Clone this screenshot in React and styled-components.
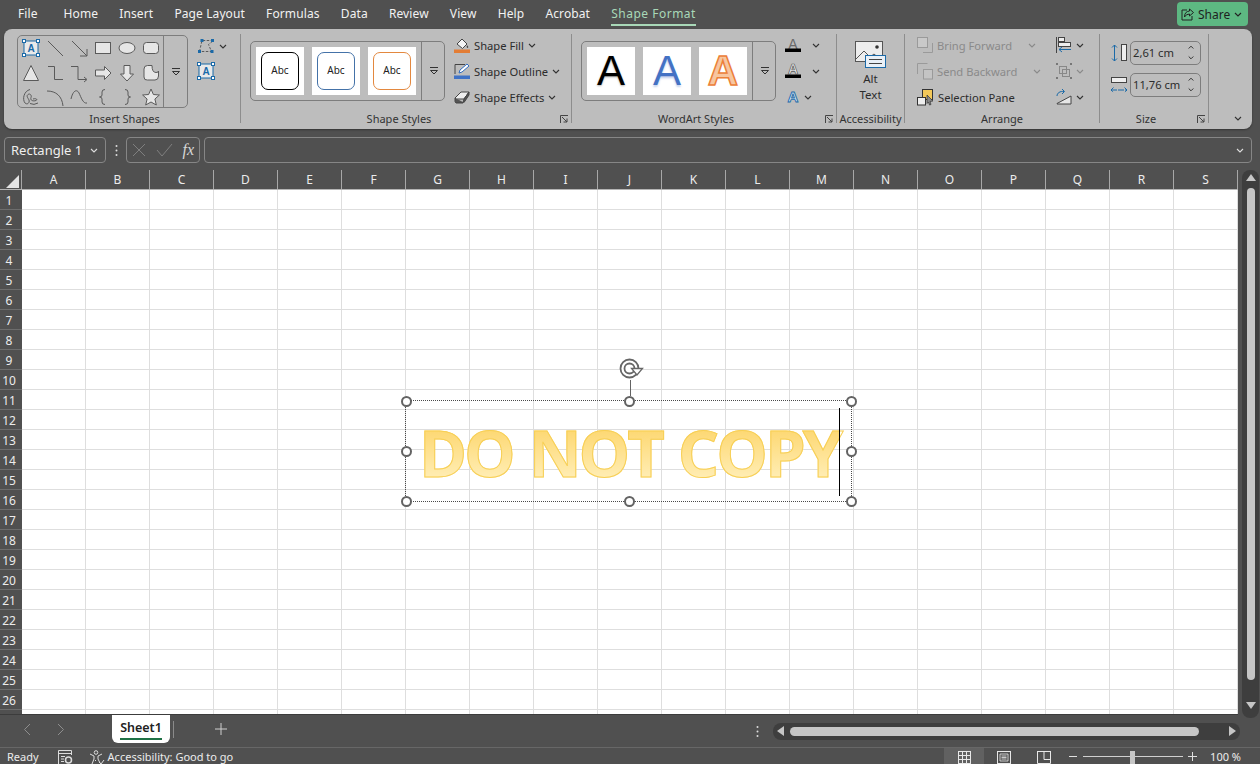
import React from "react";
import styled, { createGlobalStyle } from "styled-components";

const Global = createGlobalStyle`
  html, body { margin: 0; padding: 0; background: #505050; }
  body { font-family: "Noto Sans", "Open Sans", sans-serif; }
  * { box-sizing: border-box; }
`;

const Page = styled.div`
  width: 1260px; height: 764px; overflow: hidden; background: #505050;
  display: flex; flex-direction: column; color: #f0f0f0;
`;

/* ---------- top tabs ---------- */
const TabBar = styled.div`
  height: 29px; display: flex; align-items: flex-start; padding-left: 18px;
  position: relative;
`;
const Tab = styled.div`
  height: 26px; line-height: 28px; font-size: 12px; white-space: nowrap;
  margin-right: ${p => p.$gap ?? 21.2}px; letter-spacing: ${p => (p.$active ? 0.5 : 0.1)}px;
  color: ${p => (p.$active ? "#a9d8b8" : "#f2f2f2")};
  border-bottom: ${p => (p.$active ? "2px solid #a9d8b8" : "none")};
`;
const ShareButton = styled.div`
  margin-left: auto; margin-right: 12px; margin-top: 2px;
  width: 71px; height: 24px; border-radius: 4px; background: #5db882; color: #1f1f1f;
  display: flex; align-items: center; gap: 4px; padding-left: 4px; font-size: 12px;
`;

/* ---------- ribbon ---------- */
const Ribbon = styled.div`
  margin: 0 8px 0 4px; height: 100px; background: #bdbdbd; border-radius: 8px;
  padding-top: 5px; display: flex; color: #2c2c2c; position: relative; flex: none;
  box-shadow: 0 1px 2px rgba(0,0,0,.35);
`;
const Group = styled.div`
  width: ${p => p.$w}px; height: 89px; display: flex; flex-direction: column;
  border-right: 1px solid #8d8d8d;
`;
const GroupBody = styled.div`
  height: 77px; display: flex; align-items: flex-start;
  padding-left: ${p => p.$pad ?? 0}px;
  justify-content: ${p => (p.$center ? "center" : "flex-start")};
`;
const GroupLabel = styled.div`
  height: 12px; line-height: 16px; font-size: 11px; text-align: center; position: relative;
  color: #333; white-space: nowrap;
  padding-left: ${p => p.$pl || 0}px; padding-right: ${p => p.$pr || 0}px;
`;
const Launcher = styled.span`
  position: absolute; right: 3px; top: 4px; width: 8px; height: 8px; display: flex;
`;
const Collapse = styled.div`
  position: absolute; right: 9px; bottom: 8px; display: flex;
`;
const Palette = styled.div`
  margin-top: 1px; width: 171px; height: 73px; border: 1px solid #7d7d7d; border-radius: 5px;
  display: flex; flex: none;
`;
const PaletteGrid = styled.div`
  width: 146px; display: grid; grid-template-columns: repeat(6, 24px); grid-auto-rows: 24.4px;
  padding: 0 0 0 1px; align-items: center; justify-items: center;
`;
const GalleryMore = styled.div`
  width: 24px; margin-left: auto; border-left: 1px solid #7d7d7d; display: flex;
  align-items: center; justify-content: center; flex: none;
`;
const StackedIcons = styled.div`
  margin-left: 9px; display: flex; flex-direction: column; gap: 7px; padding-top: 3px;
`;
const IconWithArrow = styled.div`
  display: flex; align-items: center; gap: 4px; height: 18px;
`;
const Gallery = styled.div`
  margin-top: 7px; width: 195px; height: 60px; border: 1px solid #7d7d7d; border-radius: 5px;
  display: flex; flex: none;
`;
const ThumbRow = styled.div`
  padding: 5px; display: flex; gap: 8px;
`;
const Thumb = styled.div`
  width: 48px; height: 48px; background: #fff; display: flex; align-items: center; justify-content: center;
  flex: none;
`;
const AbcBox = styled.div`
  width: 38px; height: 38px; border-radius: 7px; border: 1.5px solid ${p => p.$c}; background: #fff;
  font-size: 10px; color: #222; display: flex; align-items: center; justify-content: center;
  padding-bottom: 3px;
`;
const BigA = styled.span`
  font-family: "Liberation Sans", sans-serif; font-size: 42px; line-height: 1; font-weight: ${p => p.$w || 400};
  color: ${p => p.$c};
  -webkit-text-stroke: ${p => p.$stroke || "0"};
  text-shadow: ${p => p.$shadow || "none"};
`;
const CommandList = styled.div`
  margin-top: -2px; margin-left: 9px; display: flex; flex-direction: column; flex: none;
`;
const Command = styled.div`
  height: 26px; display: flex; align-items: center; gap: 4px; font-size: 11.2px; white-space: nowrap;
  color: ${p => (p.$off ? "#8a8a8a" : "#2c2c2c")};
`;
const CommandArrowSlot = styled.span`
  margin-left: ${p => p.$m || 0}px; display: flex;
`;
const ArrangeCol = styled.div`
  width: ${p => p.$w}px; margin-top: -2px; display: flex; flex-direction: column; flex: none;
`;
const AltWrap = styled.div`
  margin-top: 7px; display: flex; flex-direction: column; align-items: center; font-size: 11.5px; line-height: 16px;
  text-align: center;
`;
const AltWords = styled.div`
  margin-top: -2px;
`;
const SizeList = styled.div`
  margin-top: 7px; display: flex; flex-direction: column; gap: 8px;
`;
const SizeRow = styled.div`
  display: flex; align-items: center; gap: 3px;
`;
const SizeInput = styled.div`
  width: 71px; height: 24px; border: 1px solid #7d7d7d; border-radius: 5px; font-size: 11.2px;
  display: flex; align-items: center; padding: 0 6px 2px 2px; justify-content: space-between;
`;

/* ---------- formula bar ---------- */
const FormulaBar = styled.div`
  margin: 8px 8px 7px 4px; height: 26px; display: flex; align-items: stretch; flex: none;
`;
const Outlined = styled.div`
  border: 1px solid #868686; border-radius: 4px; display: flex; align-items: center;
`;
const NameBox = styled(Outlined)`
  width: 102px; padding: 0 6px 0 6px; justify-content: space-between; font-size: 13px; color: #efefef;
`;
const Dots = styled.div`
  width: 20px; display: flex; align-items: center; justify-content: center;
`;
const FxBox = styled(Outlined)`
  width: 74px; padding: 0 5px 0 5px; justify-content: space-between; color: #dcdcdc;
`;
const Fx = styled.span`
  font-family: "Liberation Serif", serif; font-style: italic; font-size: 16px; color: #d8d8d8;
`;
const FormulaInput = styled(Outlined)`
  margin-left: 4px; flex: 1; justify-content: flex-end; padding-right: 6px;
`;

/* ---------- sheet ---------- */
const SheetArea = styled.div`
  display: flex; height: 545px; flex: none;
`;
const SheetMain = styled.div`
  width: 1238px; display: flex; flex-direction: column; border-bottom: 1px solid #3c3c3c;
`;
const ColHeaderRow = styled.div`
  height: 20px; display: flex; flex: none; border-bottom: 1px solid #b5b5b5;
`;
const Corner = styled.div`
  width: 22px; border-right: 1px solid #a8a8a8; padding: 5px 0 0 6px; display: flex; flex: none;
`;
const ColHeader = styled.div`
  width: 64px; flex: none; border-right: 1px solid #a8a8a8; font-size: 12px; text-align: center;
  line-height: 19px; color: #ececec;
`;
const SheetBody = styled.div`
  flex: 1; display: flex; min-height: 0;
`;
const RowHeaders = styled.div`
  width: 22px; flex: none; overflow: hidden;
`;
const RowHeader = styled.div`
  height: 20px; font-size: 12px; line-height: 21px; padding-right: 4px; text-align: center; color: #ececec;
  border-bottom: 1px solid #6d6d6d;
`;
const Canvas = styled.div`
  flex: 1; position: relative; overflow: hidden; background-color: #fff;
  background-image:
    linear-gradient(to right, transparent 63px, #dedede 63px),
    linear-gradient(to bottom, transparent 19px, #dedede 19px);
  background-size: 64px 20px;
`;
const ShapeBox = styled.div`
  position: absolute; left: 383px; top: 210px; width: 447px; height: 102px;
  border: 1px dotted #4a4a4a; display: flex; align-items: center; padding-left: 13px;
`;
const WordArt = styled.span`
  font-family: "Open Sans", Lato, sans-serif; font-weight: 700; font-size: 65px; line-height: 1; white-space: nowrap;
  margin-top: 3px; letter-spacing: -3px; word-spacing: 2px;
  background: linear-gradient(to bottom, #fdd873 15%, #ffecb0 85%);
  -webkit-background-clip: text; background-clip: text; color: transparent;
  -webkit-text-stroke: 1px #f7cf55;
`;
const Caret = styled.div`
  position: absolute; right: 11px; top: 7px; width: 1px; height: 88px; background: #000;
`;
const Handle = styled.div`
  position: absolute; width: 11px; height: 11px; border-radius: 50%; background: #fff; border: 2px solid #636363;
  left: calc(${p => p.$x}% - 5.5px); top: calc(${p => p.$y}% - 5.5px);
`;
const RotateStem = styled.div`
  position: absolute; left: 50.3%; top: -21px; width: 1px; height: 16px; background: #636363;
`;
const RotateGrip = styled.div`
  position: absolute; left: calc(50.3% - 12px); top: -45px; width: 26px; height: 26px; display: flex;
`;
const ScrollCol = styled.div`
  width: 22px; flex: none; display: flex; justify-content: center; padding-left: 0;
`;
const VTrack = styled.div`
  width: 17px; height: 548px; background: #3e3e3e; border-radius: 8px; display: flex; flex-direction: column;
  align-items: center; padding-top: 4px; position: relative; z-index: 1; margin-left: 3px;
`;
const VThumb = styled.div`
  width: 8px; height: 492px; margin-top: 7px; border-radius: 4px; background: #c6c6c6;
`;
const VArrowEnd = styled.div`
  margin-top: 22px; display: flex;
`;

/* ---------- sheet tabs ---------- */
const SheetTabs = styled.div`
  height: 32px; display: flex; flex: none; align-items: flex-start; position: relative;
`;
const NavArrows = styled.div`
  width: 112px; height: 28px; padding-left: 23px; display: flex; align-items: center; gap: 26px;
`;
const SheetTab = styled.div`
  width: 58px; height: 28px; background: #fff; border-radius: 0 0 6px 6px; color: #222; font-weight: 600;
  font-size: 12.5px; display: flex; flex-direction: column; align-items: center; padding-top: 4px;
`;
const SheetName = styled.div`
  border-bottom: 2px solid #1e7145; line-height: 18px; padding-bottom: 1px;
`;
const TabSep = styled.div`
  width: 1px; height: 17px; background: #8a8a8a; margin: 6px 0 0 3px;
`;
const AddSheet = styled.div`
  margin-left: 41px; height: 28px; display: flex; align-items: center;
`;
const HScrollArea = styled.div`
  margin-left: auto; margin-right: 20px; display: flex; align-items: center; height: 32px;
`;
const VDots = styled.div`
  margin-right: 14px; display: flex;
`;
const HTrack = styled.div`
  width: 467px; height: 17px; background: #3e3e3e; border-radius: 8px; display: flex; align-items: center;
  padding: 0 4px;
`;
const HThumb = styled.div`
  width: 409px; height: 9px; background: #c6c6c6; border-radius: 5px; margin: 0 30px 0 6px;
`;

/* ---------- status bar ---------- */
const StatusBar = styled.div`
  height: 17px; flex: none; border-top: 1px solid #676767; display: flex; align-items: flex-start;
  font-size: 11px; color: #ececec; padding-left: 7px; overflow: hidden;
`;
const StatusText = styled.span`
  line-height: 15px; padding-top: 1px; white-space: nowrap; margin-left: ${p => p.$m || 0}px;
`;
const StatusIcon = styled.span`
  margin-left: ${p => p.$m || 0}px; display: flex; padding-top: 2px;
`;
const ViewButtons = styled.div`
  margin-left: auto; display: flex; height: 16px;
`;
const ViewButton = styled.div`
  width: 40px; height: 16px; display: flex; justify-content: center; padding-top: 3px;
  background: ${p => (p.$on ? "#616161" : "transparent")};
`;
const Zoomer = styled.div`
  display: flex; align-items: center; height: 16px; margin-left: 5px; margin-right: 19px;
`;
const ZoomLine = styled.div`
  width: 100px; height: 1px; background: #d0d0d0; margin: 0 5px 0 6px; position: relative;
`;
const ZoomThumb = styled.div`
  position: absolute; left: 47px; top: -5px; width: 5px; height: 14px; background: #c6c6c6;
`;
const ZoomPct = styled.span`
  margin-left: 13px; white-space: nowrap;
`;

/* ---------- icons ---------- */
const Svg = ({ w = 20, h = 20, children, vb }) => (
  <svg width={w} height={h} viewBox={vb || `0 0 ${w} ${h}`} fill="none" style={{ display: "block", flex: "none" }}>
    {children}
  </svg>
);
const G = "#5a5a5a", F = "#e6e6e6", B = "#1b6aa8";

const Chevron = ({ c = "#333", w = 8 }) => (
  <Svg w={w} h={5} vb="0 0 8 5"><path d="M1 1l3 3 3-3" stroke={c} strokeWidth="1.1" /></Svg>
);
const BoxA = () => (
  <Svg w={18} h={18}>
    <rect x="2" y="2" width="14" height="14" fill="#e9e9e9" stroke={B} />
    {[[2, 2], [16, 2], [2, 16], [16, 16]].map(([x, y], i) => (
      <rect key={i} x={x - 1.5} y={y - 1.5} width="3" height="3" fill="#fff" stroke={B} />
    ))}
    <text x="9" y="13" fontSize="10" fontWeight="700" textAnchor="middle" fill={B} fontFamily="Liberation Sans">A</text>
  </Svg>
);
const shapes = [
  <BoxA />,
  <Svg><path d="M3 3l15 15" stroke={G} /></Svg>,
  <Svg><path d="M3 3l15 15M18 11v7h-7" stroke={G} /></Svg>,
  <Svg><rect x="2.5" y="4.5" width="15" height="11" fill={F} stroke={G} /></Svg>,
  <Svg><ellipse cx="10" cy="10" rx="8" ry="5.5" fill={F} stroke={G} /></Svg>,
  <Svg><rect x="2.5" y="4.5" width="15" height="11" rx="3" fill={F} stroke={G} /></Svg>,
  <Svg><path d="M10 2.5L17.5 17.5H2.5z" fill={F} stroke={G} /></Svg>,
  <Svg><path d="M3 3.5h6.5v13H18" stroke={G} /></Svg>,
  <Svg><path d="M2 3.5h7v13h8M15 14l3 2.500-3 2.500" stroke={G} /></Svg>,
  <Svg><path d="M2.500 7h9V3.500L18 10l-6.500 6.500V13h-9z" fill={F} stroke={G} /></Svg>,
  <Svg><path d="M7 2.500h6V11h3.500L10 18 3.500 11H7z" fill={F} stroke={G} /></Svg>,
  <Svg><path d="M3 6q0-3.500 3.500-3.500H11q0 7 4 7 2.500 0 2.500-1.500v5q0 4-3.500 4H6.500Q3 17.500 3 14z" fill={F} stroke={G} /></Svg>,
  <Svg><path d="M9 2.500C3 4 1 12 4 16c2 2 5 0 4-3-1-2-3-4-1-5.500s4 1 3 3c-1 3 2 4 5 3 2-1 0-2.500-3-1.500M9 16.500q4 2 8-.5" stroke={G} /></Svg>,
  <Svg><path d="M2 4c9 0 15 5 16 15" stroke={G} /></Svg>,
  <Svg><path d="M2 12c2-9 6-10 8-6s4 11 8 10" stroke={G} /></Svg>,
  <Svg><path d="M12 2.500q-3 0-3 2.500v3q0 2-2.500 2 2.500 0 2.500 2v3q0 2.500 3 2.500" stroke={G} /></Svg>,
  <Svg><path d="M8 2.500q3 0 3 2.500v3q0 2 2.500 2-2.500 0-2.500 2v3q0 2.500-3 2.500" stroke={G} /></Svg>,
  <Svg><path d="M10 2l2.400 5.500 6 .5-4.500 4 1.400 6L10 15l-5.300 3 1.400-6-4.500-4 6-.5z" fill={F} stroke={G} /></Svg>,
];
const More = () => (
  <Svg w={10} h={8}><path d="M1 .5h8" stroke="#333" /><path d="M1.500 3.500h7L5 7z" fill="none" stroke="#333" /></Svg>
);
const EditPoints = () => (
  <Svg w={18} h={18}>
    <path d="M2.500 14.500L5 3.500h11.500l-5 4 3 7z" stroke={G} strokeDasharray="2.500 1.500" />
    {[[2.500, 14.500], [5, 3.500], [15.500, 3.500], [15, 14.500]].map(([x, y], i) => <rect key={i} x={x - 1.500} y={y - 1.500} width="3" height="3" fill={B} />)}
  </Svg>
);
const ShapeFill = () => (
  <Svg w={16} h={16}>
    <path d="M3 7l5-5 5 5-4.500 4.500z" fill="#f4f4f4" stroke="#444" />
    <path d="M13 8q2 2 1 3-2 0-1-3z" fill="#444" />
    <rect y="12.500" width="16" height="3.500" fill="#e37d35" />
  </Svg>
);
const ShapeOutline = () => (
  <Svg w={16} h={16}>
    <path d="M1 11V1.500h10" stroke="#444" />
    <path d="M5 10l1-3 7-6 2 2-7 6z" fill="#fff" stroke="#2f6cc0" />
    <rect y="12.500" width="16" height="3.500" fill="#3f72c6" />
  </Svg>
);
const ShapeEffects = () => (
  <Svg w={16} h={16}>
    <path d="M1 9l6-6h8l-5 7H2z" fill="#eee" stroke="#444" />
    <path d="M1 9v3.500l1 1.500h7l1-4 5-7v3l-5 7.500" fill="#555" stroke="#444" />
  </Svg>
);
const TextFill = () => (
  <Svg w={16} h={18}>
    <text x="8" y="12.500" fontSize="14" fontFamily="Liberation Sans" textAnchor="middle" fill="#6a6a6a">A</text>
    <rect y="12.500" width="16" height="3.500" fill="#000" />
  </Svg>
);
const TextOutline = () => (
  <Svg w={16} h={18}>
    <text x="8" y="12" fontSize="14" fontFamily="Liberation Sans" fontWeight="700" textAnchor="middle" fill="#eee" stroke="#555" strokeWidth=".7">A</text>
    <rect y="12.500" width="16" height="3.500" fill="#000" />
  </Svg>
);
const TextEffects = () => (
  <Svg w={16} h={18}>
    <text x="8" y="13.500" fontSize="15" fontFamily="Liberation Sans" fontWeight="700" textAnchor="middle" fill="#d7e8f6" stroke="#1b6aa8" strokeWidth=".9">A</text>
  </Svg>
);
const AltIcon = () => (
  <Svg w={31} h={32}>
    <rect x=".5" y=".5" width="27" height="20" fill="#ededed" stroke="#555" />
    <path d="M1 18l8-8 6 6 4-3 6 5" stroke="#555" />
    <circle cx="22" cy="6" r="1.800" fill="#333" />
    <rect x="10.500" y="14.500" width="20" height="12" fill="#e9f0f7" stroke="#1b6aa8" />
    <path d="M14 18.500h13M14 22.500h13" stroke="#444" />
  </Svg>
);
const Layered = ({ top = "#c9c9c9", line = "#9a9a9a", front = "#c4c4c4", frontOnTop }) => (
  <Svg w={16} h={17}>
    {frontOnTop ? (
      <>
        <path d="M.5 11V.5h10" stroke={line} />
        <rect x="6.500" y="6.500" width="9" height="9.500" fill={front} stroke={line} />
      </>
    ) : (
      <>
        <rect x=".5" y=".5" width="10" height="10" fill={top} stroke={line} />
        <path d="M6 15.500h9.500V6" stroke={line} />
      </>
    )}
  </Svg>
);
const SelectionPane = () => (
  <Svg w={17} h={17}>
    <rect x="5.500" y=".5" width="10" height="10" fill="#f3c859" stroke="#333" />
    <rect x=".5" y="8.500" width="8" height="7.500" fill="#eee" stroke="#333" />
    <path d="M10 6l6 6-3 .5 1 3-1.500.5-1-3-1.500 1.500z" fill="#888" stroke="#333" strokeWidth=".7" />
  </Svg>
);
const Align = () => (
  <Svg w={16} h={16}>
    <path d="M.5 0v16" stroke="#444" />
    <rect x="2.500" y=".5" width="6" height="4" fill="#eee" stroke="#444" />
    <rect x="2.500" y="5.500" width="12" height="4" fill="#eee" stroke="#444" />
    <path d="M3 12.500h12M3 12.500l3-2.500M3 12.500l3 2.500" stroke={B} />
  </Svg>
);
const GroupIcon = () => (
  <Svg w={16} h={16}>
    <rect x="3.500" y="3.500" width="7" height="7" stroke="#888" />
    <rect x="6.500" y="6.500" width="7" height="7" stroke="#888" />
    {[[0, 0], [14, 0], [0, 14], [14, 14]].map(([x, y], i) => <rect key={i} x={x} y={y} width="2" height="2" fill="#777" />)}
  </Svg>
);
const Rotate = () => (
  <Svg w={16} h={16}>
    <path d="M1 14.500L15 7v8H1z" fill="#e6e6e6" stroke="#444" />
    <path d="M1 7c0-3 3-5 7-4.500M6 0l2.500 2.500L6 5" stroke={B} />
  </Svg>
);
const HeightIcon = () => (
  <Svg w={16} h={18}>
    <rect x="10.500" y=".5" width="5" height="16" fill="#eee" stroke="#444" />
    <path d="M3.500 1v16M1 3.500L3.500 1 6 3.500M1 14.500L3.500 17 6 14.500" stroke={B} />
  </Svg>
);
const WidthIcon = () => (
  <Svg w={16} h={16}>
    <rect x=".5" y=".5" width="15" height="5" fill="#eee" stroke="#444" />
    <path d="M0 13h16M2.500 10.500L0 13l2.500 2.500M13.500 10.500L16 13l-2.500 2.500" stroke={B} strokeDasharray="6 1" />
  </Svg>
);
const Spin = () => (
  <Svg w={6} h={15}><path d="M.7 3.500L3 1.200l2.300 2.300M.7 11.500L3 13.800l2.300-2.300" stroke="#333" /></Svg>
);
const LauncherIcon = () => (
  <Svg w={8} h={8}><path d="M.5 8V.5H8M2 2l5 5M7 3.500V7H3.500" stroke="#444" /></Svg>
);
const ShareIcon = () => (
  <Svg w={13} h={13}><path d="M8.500 1L12.500 4.500 8.500 8V6Q5 6 3.500 9 3.500 3.500 8.500 3zM6 2H1v10h10V8" stroke="#222" /></Svg>
);
const Ellipsis = () => (
  <Svg w={3} h={13}><circle cx="1.500" cy="2" r="1" fill="#ddd" /><circle cx="1.500" cy="6.500" r="1" fill="#ddd" /><circle cx="1.500" cy="11" r="1" fill="#ddd" /></Svg>
);
const Cross = () => <Svg w={14} h={14}><path d="M1 1l12 12M13 1L1 13" stroke="#7f7f7f" /></Svg>;
const Check = () => <Svg w={17} h={14}><path d="M1 7l5 6L16 1" stroke="#7f7f7f" /></Svg>;
const RotateHandle = () => (
  <Svg w={26} h={26}>
    <circle cx="11.500" cy="12.500" r="9" fill="#fff" stroke="#666" strokeWidth="1.800" />
    <circle cx="11.500" cy="12.500" r="5" stroke="#666" strokeWidth="1.800" />
    <path d="M13.500 12.500h11l-5.500 6.500z" fill="#fff" stroke="#666" strokeWidth="1.300" />
  </Svg>
);
const Tri = ({ d = "up" }) => {
  const p = { up: "M0 7L5 0l5 7z", down: "M0 0l5 7 5-7z", left: "M7 0L0 5l7 5z", right: "M0 0l7 5-7 5z" }[d];
  const vert = d === "up" || d === "down";
  return <Svg w={vert ? 10 : 7} h={vert ? 7 : 10}><path d={p} fill="#c6c6c6" /></Svg>;
};
const Arrow = ({ d }) => (
  <Svg w={8} h={13}><path d={d === "l" ? "M7 1L1.500 6.500 7 12" : "M1 1l5.500 5.500L1 12"} stroke="#8e8e8e" /></Svg>
);
const Plus = ({ s = 13, c = "#cfcfcf" }) => (
  <Svg w={s} h={s}><path d={`M${s / 2} 0v${s}M0 ${s / 2}h${s}`} stroke={c} /></Svg>
);
const MacroIcon = () => (
  <Svg w={15} h={14}>
    <path d="M.5 14V.5h13V5M.5 3.500h13M3 6.500h4M3 9h3M3 11.500h3" stroke="#ddd" />
    <circle cx="10.500" cy="10" r="3" stroke="#ddd" strokeWidth="1.500" />
  </Svg>
);
const AccessIcon = () => (
  <Svg w={16} h={15}>
    <circle cx="7" cy="2.500" r="1.800" stroke="#ddd" />
    <path d="M1 4l4 2v3l-2 5M13 4L9 6v3l2 4M6 10l1 1" stroke="#ddd" />
    <path d="M10 12l2 2 3-4" stroke="#ddd" />
  </Svg>
);
const GridView = () => (
  <Svg w={13} h={13}><path d="M.5 0v13M4.500 0v13M8.500 0v13M12.500 0v13M0 .5h13M0 4.500h13M0 8.500h13M0 12.500h13" stroke="#e8e8e8" /></Svg>
);
const PageView = () => (
  <Svg w={14} h={13}><rect x=".5" y=".5" width="13" height="12" stroke="#e8e8e8" /><path d="M3 3h8v7H3zM4.500 5h5M4.500 6.500h5M4.500 8h5" stroke="#e8e8e8" strokeWidth=".8" /></Svg>
);
const BreakView = () => (
  <Svg w={14} h={13}><path d="M.5 0v12.500h13V0M.5.5h13M7 0v8.500h6.500" stroke="#e8e8e8" /></Svg>
);

const TABS = [
  ["File", 26], ["Home"], ["Insert"], ["Page Layout"], ["Formulas"], ["Data"], ["Review"], ["View"], ["Help"], ["Acrobat"],
];
const COLS = "ABCDEFGHIJKLMNOPQRS".split("");
const ROWS = Array.from({ length: 26 }, (_, i) => i + 1);
const HANDLES = [[0, 0], [50.3, 0], [100, 0], [0, 50], [100, 50], [0, 100], [50.3, 100], [100, 100]];

export default function App() {
  return (
    <Page>
      <Global />
      <TabBar>
        {TABS.map(([t, g]) => <Tab key={t} $gap={g}>{t}</Tab>)}
        <Tab $active>Shape Format</Tab>
        <ShareButton><ShareIcon />Share<Chevron c="#222" /></ShareButton>
      </TabBar>

      <Ribbon>
        <Group $w={237}>
          <GroupBody $pad={13}>
            <Palette>
              <PaletteGrid>{shapes.map((s, i) => <React.Fragment key={i}>{s}</React.Fragment>)}</PaletteGrid>
              <GalleryMore><More /></GalleryMore>
            </Palette>
            <StackedIcons>
              <IconWithArrow><EditPoints /><Chevron /></IconWithArrow>
              <IconWithArrow><BoxA /></IconWithArrow>
            </StackedIcons>
          </GroupBody>
          <GroupLabel $pl={5}>Insert Shapes</GroupLabel>
        </Group>

        <Group $w={331}>
          <GroupBody $pad={9}>
            <Gallery>
              <ThumbRow>
                <Thumb><AbcBox $c="#000">Abc</AbcBox></Thumb>
                <Thumb><AbcBox $c="#4472a8">Abc</AbcBox></Thumb>
                <Thumb><AbcBox $c="#e3883f">Abc</AbcBox></Thumb>
              </ThumbRow>
              <GalleryMore><More /></GalleryMore>
            </Gallery>
            <CommandList>
              <Command><ShapeFill />Shape Fill<Chevron /></Command>
              <Command><ShapeOutline />Shape Outline<Chevron /></Command>
              <Command><ShapeEffects />Shape Effects<Chevron /></Command>
            </CommandList>
          </GroupBody>
          <GroupLabel $pr={14}>Shape Styles<Launcher><LauncherIcon /></Launcher></GroupLabel>
        </Group>

        <Group $w={265}>
          <GroupBody $pad={9}>
            <Gallery>
              <ThumbRow>
                <Thumb><BigA $c="#000" $shadow="0 1px 2px rgba(0,0,0,.3)">A</BigA></Thumb>
                <Thumb><BigA $c="#4472c4" $shadow="0 2px 2px rgba(68,114,196,.3)">A</BigA></Thumb>
                <Thumb><BigA $c="#f7c6a0" $w={700} $stroke="1.5px #ec8038">A</BigA></Thumb>
              </ThumbRow>
              <GalleryMore><More /></GalleryMore>
            </Gallery>
            <CommandList>
              <Command><TextFill /><CommandArrowSlot $m={7}><Chevron /></CommandArrowSlot></Command>
              <Command><TextOutline /><CommandArrowSlot $m={7}><Chevron /></CommandArrowSlot></Command>
              <Command><TextEffects /><CommandArrowSlot $m={-1}><Chevron /></CommandArrowSlot></Command>
            </CommandList>
          </GroupBody>
          <GroupLabel $pr={16}>WordArt Styles<Launcher><LauncherIcon /></Launcher></GroupLabel>
        </Group>

        <Group $w={68}>
          <GroupBody $center>
            <AltWrap>
              <AltIcon />
              <AltWords>Alt<br />Text</AltWords>
            </AltWrap>
          </GroupBody>
          <GroupLabel>Accessibility</GroupLabel>
        </Group>

        <Group $w={195}>
          <GroupBody $pad={12}>
            <ArrangeCol $w={139}>
              <Command $off><Layered />Bring Forward<CommandArrowSlot $m={12}><Chevron c="#8a8a8a" /></CommandArrowSlot></Command>
              <Command $off><Layered frontOnTop />Send Backward<CommandArrowSlot $m={12}><Chevron c="#8a8a8a" /></CommandArrowSlot></Command>
              <Command><SelectionPane />Selection Pane</Command>
            </ArrangeCol>
            <ArrangeCol $w={30}>
              <Command><Align /><Chevron /></Command>
              <Command><GroupIcon /><Chevron c="#8a8a8a" /></Command>
              <Command><Rotate /><Chevron /></Command>
            </ArrangeCol>
          </GroupBody>
          <GroupLabel>Arrange</GroupLabel>
        </Group>

        <Group $w={109}>
          <GroupBody $pad={11}>
            <SizeList>
              <SizeRow><HeightIcon /><SizeInput>2,61 cm<Spin /></SizeInput></SizeRow>
              <SizeRow><WidthIcon /><SizeInput>11,76 cm<Spin /></SizeInput></SizeRow>
            </SizeList>
          </GroupBody>
          <GroupLabel $pr={16}>Size<Launcher><LauncherIcon /></Launcher></GroupLabel>
        </Group>
        <Collapse><Chevron w={10} /></Collapse>
      </Ribbon>

      <FormulaBar>
        <NameBox>Rectangle 1<Chevron c="#ddd" w={10} /></NameBox>
        <Dots><Ellipsis /></Dots>
        <FxBox><Cross /><Check /><Fx>fx</Fx></FxBox>
        <FormulaInput><Chevron c="#ddd" w={10} /></FormulaInput>
      </FormulaBar>

      <SheetArea>
        <SheetMain>
          <ColHeaderRow>
            <Corner><Svg w={13} h={13}><path d="M13 0v13H0z" fill="#e4e4e4" /></Svg></Corner>
            {COLS.map(c => <ColHeader key={c}>{c}</ColHeader>)}
          </ColHeaderRow>
          <SheetBody>
            <RowHeaders>{ROWS.map(r => <RowHeader key={r}>{r}</RowHeader>)}</RowHeaders>
            <Canvas>
              <ShapeBox>
                <WordArt>DO NOT COPY</WordArt>
                <Caret />
                <RotateStem />
                <RotateGrip><RotateHandle /></RotateGrip>
                {HANDLES.map(([x, y]) => <Handle key={`${x}-${y}`} $x={x} $y={y} />)}
              </ShapeBox>
            </Canvas>
          </SheetBody>
        </SheetMain>
        <ScrollCol>
          <VTrack>
            <Tri d="up" />
            <VThumb />
            <VArrowEnd><Tri d="down" /></VArrowEnd>
          </VTrack>
        </ScrollCol>
      </SheetArea>

      <SheetTabs>
        <NavArrows><Arrow d="l" /><Arrow d="r" /></NavArrows>
        <SheetTab><SheetName>Sheet1</SheetName></SheetTab>
        <TabSep />
        <AddSheet><Plus s={12} /></AddSheet>
        <HScrollArea>
          <VDots><Ellipsis /></VDots>
          <HTrack>
            <Tri d="left" />
            <HThumb />
            <Tri d="right" />
          </HTrack>
        </HScrollArea>
      </SheetTabs>

      <StatusBar>
        <StatusText>Ready</StatusText>
        <StatusIcon $m={19}><MacroIcon /></StatusIcon>
        <StatusIcon $m={16}><AccessIcon /></StatusIcon>
        <StatusText $m={3}>Accessibility: Good to go</StatusText>
        <ViewButtons>
          <ViewButton $on><GridView /></ViewButton>
          <ViewButton><PageView /></ViewButton>
          <ViewButton><BreakView /></ViewButton>
        </ViewButtons>
        <Zoomer>
          <Svg w={8} h={1}><path d="M0 .5h8" stroke="#e0e0e0" /></Svg>
          <ZoomLine><ZoomThumb /></ZoomLine>
          <Plus s={9} c="#e0e0e0" />
          <ZoomPct>100 %</ZoomPct>
        </Zoomer>
      </StatusBar>
    </Page>
  );
}
